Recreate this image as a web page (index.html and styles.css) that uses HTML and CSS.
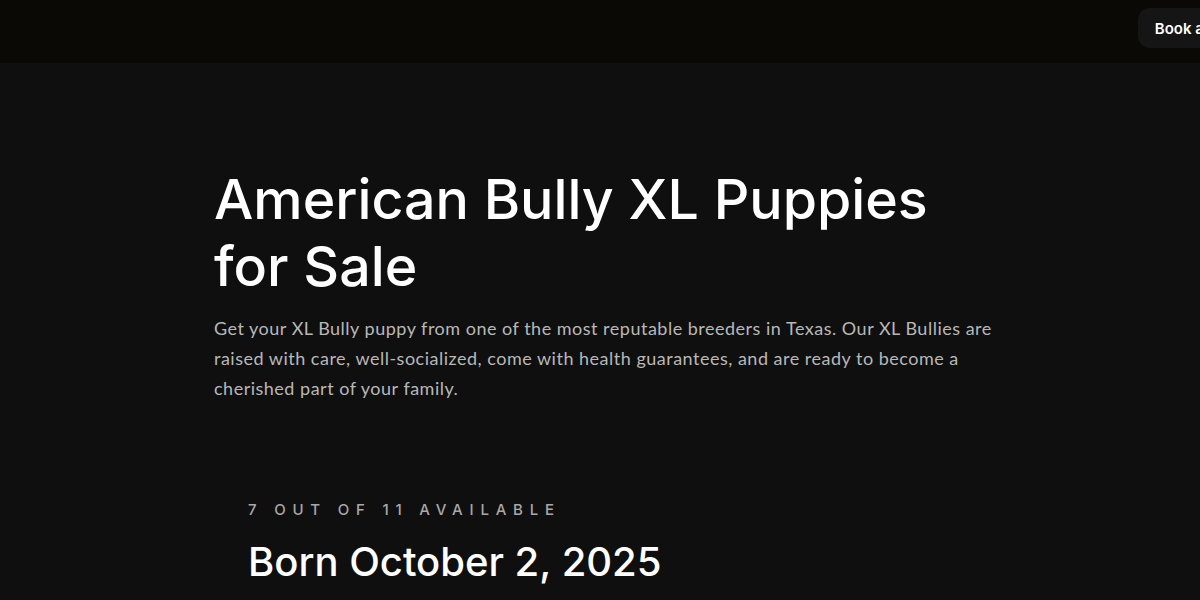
FILE: index.html
```html
<!DOCTYPE html>
<html lang="en">
<head>
<meta charset="utf-8">
<title>American Bully XL Puppies for Sale</title>
<link rel="stylesheet" href="styles.css">
</head>
<body>
<header class="topbar">
  <div class="topbar-spacer"></div>
  <a class="book-btn" href="#">Book a Visit</a>
</header>
<main class="page">
  <section class="hero">
    <h1 class="hero-title">American Bully XL Puppies<br>for Sale</h1>
    <p class="hero-text">Get your XL Bully puppy from one of the most reputable breeders in Texas. Our XL Bullies are raised with care, well-socialized, come with health guarantees, and are ready to become a cherished part of your family.</p>
  </section>
  <section class="litter">
    <div class="litter-count">7 out of 11 available</div>
    <h2 class="litter-title">Born October 2, 2025</h2>
  </section>
</main>
</body>
</html>
```
FILE: styles.css
```css
* { box-sizing: border-box; }
html, body { margin: 0; padding: 0; }
body {
  background: #0f0f0f;
  color: #fff;
  font-family: Inter, "Liberation Sans", sans-serif;
  width: 1200px;
  height: 600px;
  overflow: hidden;
}
.topbar {
  height: 63px;
  background: #0a0905;
  display: flex;
  align-items: flex-start;
  overflow: hidden;
}
.topbar-spacer { flex: 1; }
.book-btn {
  flex: none;
  margin: 8px -58px 0 0;
  height: 40px;
  padding: 0 18px 0 17px;
  display: flex;
  align-items: center;
  background: #151515;
  border-radius: 12px;
  color: #fff;
  text-decoration: none;
  font-size: 15px;
  font-weight: 600;
  white-space: nowrap;
}
.page {
  padding: 0 0 0 214px;
}
.hero { padding-top: 102px; }
.hero-title {
  margin: 0;
  font-size: 55.5px;
  font-weight: 500;
  line-height: 67px;
  letter-spacing: 0;
}
.hero-text {
  margin: 14px 0 0;
  width: 790px;
  font-family: Lato, Inter, sans-serif;
  font-size: 18px;
  line-height: 30px;
  letter-spacing: 0.5px;
  color: #b8b8b8;
}
.litter {
  padding: 97px 0 0 34px;
}
.litter-count {
  text-transform: uppercase;
  font-size: 15px;
  font-weight: 500;
  letter-spacing: 6.8px;
  color: #a8a8a8;
  line-height: 20px;
}
.litter-title {
  margin: 18px 0 0;
  font-size: 40px;
  font-weight: 500;
  line-height: 48px;
}
```
